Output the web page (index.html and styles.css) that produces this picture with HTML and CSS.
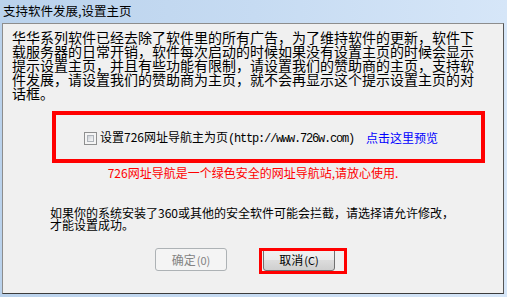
FILE: index.html
```html
<!DOCTYPE html>
<html lang="zh-CN">
<head>
<meta charset="utf-8">
<title>支持软件发展,设置主页</title>
<link rel="stylesheet" href="styles.css">
</head>
<body>
<div class="window">
  <div class="titlebar"><span class="title">支持软件发展,设置主页</span></div>
  <div class="panel">
    <p class="intro">华华系列软件已经去除了软件里的所有广告，为了维持软件的更新，软件下<br>载服务器的日常开销，软件每次启动的时候如果没有设置主页的时候会显示<br>提示设置主页，并且有些功能有限制，请设置我们的赞助商的主页，支持软<br>件发展，请设置我们的赞助商为主页，就不会再显示这个提示设置主页的对<br>话框。</p>
    <div class="highlight">
      <label class="opt"><span class="cb"></span><span class="opt-text">设置726网址导航主为页<span class="url">(http://www.726w.com)</span></span></label>
      <a class="preview">点击这里预览</a>
    </div>
    <p class="note">726网址导航是一个绿色安全的网址导航站,请放心使用.</p>
    <p class="warn">如果你的系统安装了360或其他的安全软件可能会拦截，请选择请允许修改，<br>才能设置成功。</p>
    <div class="buttons">
      <button class="btn" disabled>确定<span class="key">(0)</span></button>
      <span class="btn-wrap"><button class="btn primary">取消<span class="key">(C)</span></button><span class="mark"></span></span>
    </div>
  </div>
</div>
</body>
</html>
```

FILE: styles.css
```css
* { box-sizing: border-box; }
html, body { margin: 0; padding: 0; }
body {
  width: 507px;
  height: 297px;
  overflow: hidden;
  font-family: "Noto Sans CJK SC", "Noto Sans", sans-serif;
  background: #bfd6ef;
}
.window {
  width: 507px;
  height: 297px;
  display: flex;
  flex-direction: column;
  background: linear-gradient(90deg, #bad2ec 0%, #c6dbf2 50%, #d6e6f8 100%);
}
.titlebar {
  height: 23px;
  display: flex;
  align-items: center;
  padding-left: 3px;
}
.title {
  font-size: 12.5px;
  line-height: 14px;
  color: #000;
  margin-top: -2px;
}
.panel {
  margin: 0 3px 3px 2px;
  height: 271px;
  background: #f0f0f0;
  border: 1px solid;
  border-color: #8d8d8d #555 #3c3c3c #8d8d8d;
  display: flex;
  flex-direction: column;
}
.intro {
  margin: 6px 0 0 9px;
  font-size: 14px;
  line-height: 14px;
  white-space: nowrap;
  color: #000;
}
.highlight {
  margin: 11px 0 0 49px;
  width: 433px;
  height: 52px;
  border: 4px solid #ff0000;
  display: flex;
  align-items: center;
  padding: 2px 0 0 28px;
  font-size: 12px;
  line-height: 14px;
}
.opt {
  display: flex;
  align-items: center;
  color: #000;
}
.cb {
  width: 13px;
  height: 13px;
  border: 1px solid #8e8f8f;
  background: #f4f4f4;
  position: relative;
  margin-right: 3px;
  flex: none;
}
.cb::after {
  content: "";
  position: absolute;
  left: 2px; top: 2px; right: 2px; bottom: 2px;
  background: linear-gradient(135deg, #cbcfd5 0%, #e8eaec 60%, #f6f6f6 100%);
  border: 1px solid #aeb3b9;
}
.url {
  font-family: "Liberation Mono", monospace;
  font-size: 12px;
  letter-spacing: -1.2px;
}
.preview {
  margin-left: 12px;
  color: #0000ff;
  cursor: pointer;
}
.note {
  margin: 3px 0 0;
  text-align: center;
  font-size: 12px;
  line-height: 14px;
  color: #ff0000;
}
.warn {
  margin: 27px 0 0 47px;
  font-size: 12px;
  line-height: 12px;
  white-space: nowrap;
  color: #000;
}
.buttons {
  margin: 17px 0 0 152px;
  display: flex;
  gap: 36px;
}
.btn {
  width: 72px;
  height: 23px;
  padding: 0;
  font-family: "Noto Sans CJK SC", "Noto Sans", sans-serif;
  font-size: 12px;
  line-height: 14px;
  border: 1px solid #707070;
  border-radius: 3px;
  background: linear-gradient(180deg, #f2f2f2 0%, #ebebeb 50%, #dddddd 51%, #cfcfcf 100%);
  color: #000;
}
.btn:disabled {
  border-color: #adb2b5;
  background: #f4f4f4;
  color: #838383;
}
.key { font-size: 11px; margin-left: 1px; }
.btn-wrap { position: relative; display: flex; }
.mark {
  position: absolute;
  left: -4px;
  top: 0;
  width: 88px;
  height: 26px;
  border: 3px solid #ff0000;
  pointer-events: none;
}
```
